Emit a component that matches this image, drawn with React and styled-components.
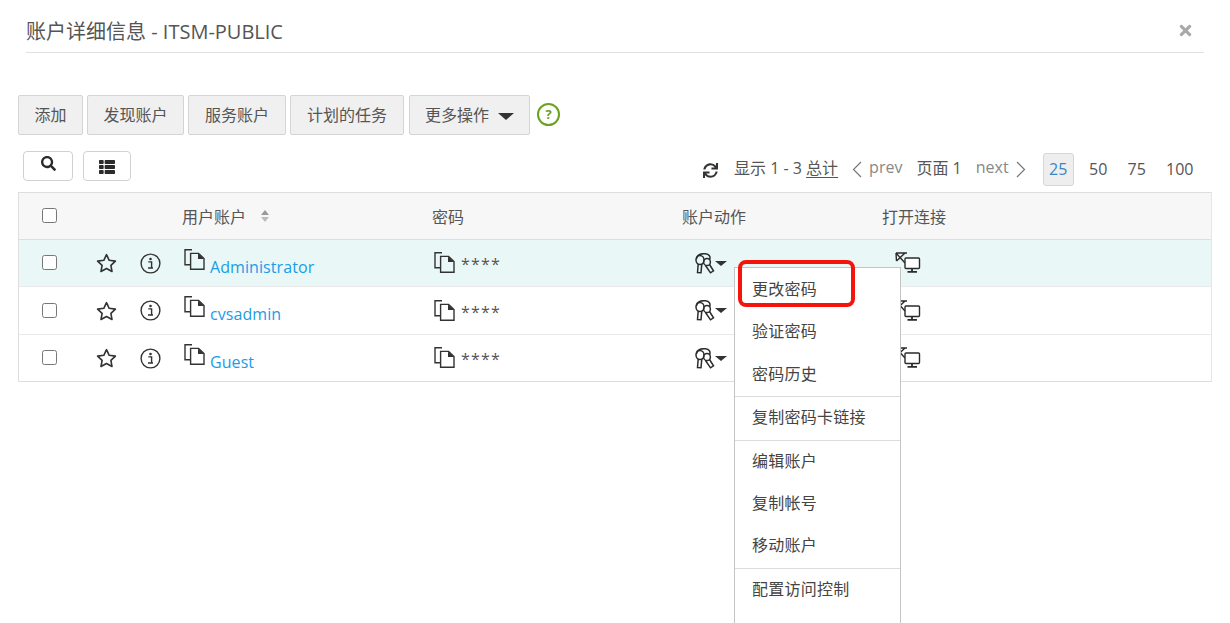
import styled, { createGlobalStyle } from "styled-components";
import { FaSearch, FaThList, FaSync, FaTimes } from "react-icons/fa";

const Global = createGlobalStyle`
  html, body { margin: 0; padding: 0; background: #fff; height: 623px; overflow: hidden; }
  body { font-family: "Open Sans", "Noto Sans CJK SC", sans-serif; color: #444; }
`;

const Page = styled.div`
  position: relative;
  width: 1230px;
  height: 623px;
  overflow: hidden;
`;
const TitleBar = styled.div`
  display: flex;
  justify-content: space-between;
  align-items: center;
  height: 52px;
  margin: 0 26px;
  padding-right: 10px;
  border-bottom: 1px solid #e0e0e0;
  box-sizing: content-box;
`;
const Title = styled.div`
  font-size: 20px;
  color: #555;
  padding-top: 9px;
`;
const Close = styled.span`
  display: flex;
  color: #a9a9a9;
  font-size: 17px;
  padding-top: 8px;
`;
const Toolbar = styled.div`
  display: flex;
  align-items: flex-start;
  margin: 42px 0 0 18px;
  gap: 4px;
`;
const ActionButton = styled.button`
  height: 40px;
  width: ${(p) => p.$w}px;
  padding: 0 0 2px;
  background: #f0f0f0;
  border: 1px solid #d4d4d4;
  border-radius: 2px;
  font: 16px "Open Sans", "Noto Sans CJK SC", sans-serif;
  color: #555;
  display: flex;
  align-items: center;
  justify-content: center;
  gap: 9px;
  margin-left: ${(p) => p.$ml || 0}px;
`;
const Caret = styled.span`
  display: inline-block;
  width: 0;
  height: 0;
  border-left: ${(p) => p.$size}px solid transparent;
  border-right: ${(p) => p.$size}px solid transparent;
  border-top: ${(p) => p.$size - 1}px solid #333;
  margin-top: ${(p) => p.$top || 0}px;
`;
const Help = styled.span`
  width: 19px;
  height: 19px;
  border: 2px solid #6aa11e;
  border-radius: 50%;
  color: #6aa11e;
  font: bold 13px/19px "Open Sans", sans-serif;
  text-align: center;
  margin: 8px 0 0 3px;
`;
const FilterRow = styled.div`
  display: flex;
  justify-content: space-between;
  align-items: flex-start;
  height: 42px;
  margin: 15px 30px 0 23px;
`;
const Tools = styled.div`
  display: flex;
  gap: 10px;
  padding-top: 1px;
`;
const IconButton = styled.button`
  width: ${(p) => p.$w}px;
  height: 30px;
  padding: ${(p) => p.$pt}px 0 ${(p) => p.$pb}px;
  background: #fff;
  border: 1px solid #d2d2d2;
  border-radius: 4px;
  color: #2b2b2b;
  font-size: ${(p) => p.$fs}px;
  display: flex;
  align-items: center;
  justify-content: center;
`;
const Pager = styled.div`
  display: flex;
  align-items: center;
  font-size: 16px;
  color: #555;
  height: 34px;
  margin-top: 2px;
`;
const Refresh = styled.span`
  display: flex;
  font-size: 15px;
  color: #333;
  margin: 3px 16px 0 0;
`;
const PagerText = styled.span`
  margin: 0 0 5px ${(p) => p.$ml || 0}px;
`;
const Total = styled.span`
  text-decoration: underline;
  text-underline-offset: 3px;
`;
const Muted = styled.span`
  color: #888;
  display: flex;
  align-items: center;
  gap: 7px;
  margin-left: 14px;
`;
const PageSize = styled.span`
  font-size: 16px;
  height: 33px;
  line-height: 31px;
  padding: 0 5.5px;
  box-sizing: border-box;
  border: 1px solid ${(p) => (p.$active ? "#d6d6d6" : "transparent")};
  border-radius: 3px;
  background: ${(p) => (p.$active ? "#eee" : "transparent")};
  color: ${(p) => (p.$active ? "#3d85c6" : "#555")};
  margin: ${(p) => (p.$active ? "0 1.5px 0 17px" : "0 0 0 7.2px")};
`;
const Table = styled.div`
  margin: 0 18px;
  border: 1px solid #dedede;
  border-right-color: #e6e6e6;
`;
const Row = styled.div`
  display: grid;
  grid-template-columns: 163px 250px 250px 200px 1fr;
  align-items: center;
  height: ${(p) => p.$h}px;
  background: ${(p) => p.$bg || "#fff"};
  border-bottom: ${(p) => (p.$last ? "none" : "1px solid #e9e9e9")};
  box-sizing: border-box;
  font-size: 16px;
`;
const Lead = styled.div`
  display: flex;
  align-items: center;
  padding-left: 23px;
`;
const Check = styled.span`
  width: 13px;
  height: 13px;
  margin-top: -1px;
  border: 1.5px solid #777;
  border-radius: 2.5px;
  background: #fff;
`;
const HeadText = styled.span`
  display: flex;
  align-items: center;
  gap: 15px;
  color: #555;
`;
const Sorter = styled.span`
  display: flex;
  flex-direction: column;
  gap: 2px;
`;
const SortTip = styled.span`
  width: 0;
  height: 0;
  border-left: 4px solid transparent;
  border-right: 4px solid transparent;
  ${(p) => (p.$up ? "border-bottom: 5px solid #999;" : "border-top: 5px solid #bbb;")}
`;
const Cell = styled.div`
  display: flex;
  align-items: flex-start;
  padding-left: ${(p) => p.$pl || 0}px;
`;
const AccountLink = styled.a`
  color: #1b9ce6;
  font-size: 16px;
  margin: 7px 0 0 5px;
  line-height: 22px;
  letter-spacing: 0.08px;
`;
const Stars = styled.span`
  color: #555;
  font-size: 16px;
  letter-spacing: 1.2px;
  margin: 3px 0 0 6px;
  line-height: 19px;
`;
const Menu = styled.div`
  position: absolute;
  left: 734px;
  top: 267px;
  width: 167px;
  height: 400px;
  background: #fff;
  border: 1px solid #c4c4c4;
  box-sizing: border-box;
  padding-top: 1px;
  z-index: 2;
`;
const MenuItem = styled.div`
  height: 42.4px;
  line-height: 41.5px;
  padding-left: 17px;
  font-size: 16px;
  letter-spacing: 0.25px;
  color: #444;
`;
const MenuLine = styled.div`
  height: 1px;
  background: #dcdcdc;
`;
const Highlight = styled.div`
  position: absolute;
  left: 738px;
  top: 260px;
  width: 117px;
  height: 47px;
  border: 4px solid #f5140c;
  border-radius: 8px;
  box-sizing: border-box;
  z-index: 3;
`;

const StarIcon = () => (
  <svg width="21" height="20" viewBox="0 0 21 20" fill="none" stroke="#333" strokeWidth="1.6" style={{ marginLeft: 39 }}>
    <path d="M10.5 1.6l2.7 5.7 6.2.8-4.5 4.3 1.1 6.1-5.5-3-5.5 3 1.1-6.1L1.6 8.1l6.2-.8z" strokeLinejoin="round" />
  </svg>
);

const InfoIcon = () => (
  <svg width="21" height="21" viewBox="0 0 21 21" fill="none" style={{ marginLeft: 23 }}>
    <circle cx="10.5" cy="10.5" r="9.4" stroke="#333" strokeWidth="1.4" />
    <circle cx="10.5" cy="6" r="1.3" fill="#333" />
    <path d="M8.3 8.9h3.3v6h1.2M8 15h5" stroke="#333" strokeWidth="1.4" />
  </svg>
);

const CopyIcon = () => (
  <svg width="21" height="21" viewBox="0 0 21 21" fill="none" stroke="#333" strokeWidth="1.4">
    <path d="M8 .8H1v15h5" />
    <path d="M6.6 4.4h8l5.4 5.2v10.7H6.6z" />
    <path d="M14 4.4l6 5.6h-6z" fill="#333" stroke="none" />
  </svg>
);

const KeysIcon = () => (
  <svg width="20" height="21" viewBox="0 0 20 21" fill="none" stroke="#2b2b2b" strokeWidth="1.5">
    <path d="M1.5 6C1.5 1.5 7 .3 10.5.8c3.5.5 5.5 2.8 4 6" />
    <ellipse cx="5" cy="7" rx="4" ry="4.5" />
    <path d="M3.2 11l-.7 8.5 3.500.3.8-8.800" />
    <ellipse cx="12" cy="9" rx="3.400" ry="3.600" />
    <path d="M10.500 12.500l5 7.300 3-2-4-6.300" />
  </svg>
);

const LinkIcon = () => (
  <svg width="26" height="22" viewBox="0 0 26 22" fill="none" stroke="#2b2b2b" strokeWidth="1.4">
    <path d="M1 1h11M1 1l9 10M1.500 9L10 1M1 1l.5 8" />
    <rect x="10" y="6" width="14.500" height="10.500" rx="1" fill="#fff" />
    <path d="M17 16.500v3M12.500 19.800h9.500" strokeWidth="1.800" />
  </svg>
);

const rows = [
  { name: "Administrator", bg: "#e9f8f6", h: 47 },
  { name: "cvsadmin", h: 48 },
  { name: "Guest", h: 46, last: true },
];

const App = () => {
  return (
    <Page>
      <Global />
      <TitleBar>
        <Title>账户详细信息 - ITSM-PUBLIC</Title>
        <Close><FaTimes /></Close>
      </TitleBar>

      <Toolbar>
        <ActionButton $w={65}>添加</ActionButton>
        <ActionButton $w={97}>发现账户</ActionButton>
        <ActionButton $w={98}>服务账户</ActionButton>
        <ActionButton $w={114}>计划的任务</ActionButton>
        <ActionButton $w={121} $ml={1}>更多操作<Caret $size={8} $top={5} /></ActionButton>
        <Help>?</Help>
      </Toolbar>

      <FilterRow>
        <Tools>
          <IconButton $w={50} $pt={0} $pb={6} $fs={15}><FaSearch /></IconButton>
          <IconButton $w={48} $pt={2} $pb={0} $fs={16}><FaThList /></IconButton>
        </Tools>
        <Pager>
          <Refresh><FaSync /></Refresh>
          <PagerText>显示 1 - 3 <Total>总计</Total></PagerText>
          <Muted>
            <svg width="10" height="17" viewBox="0 0 10 17" fill="none" stroke="#777" strokeWidth="1.2"><path d="M9 1L1.5 8.5 9 16" /></svg>
            <PagerText>prev</PagerText>
          </Muted>
          <PagerText $ml={14}>页面 1</PagerText>
          <Muted>
            <PagerText>next</PagerText>
            <svg width="10" height="17" viewBox="0 0 10 17" fill="none" stroke="#777" strokeWidth="1.2"><path d="M1 1l7.500 7.500L1 16" /></svg>
          </Muted>
          <PageSize $active>25</PageSize>
          <PageSize>50</PageSize>
          <PageSize>75</PageSize>
          <PageSize>100</PageSize>
        </Pager>
      </FilterRow>

      <Table>
        <Row $h={47} $bg="#f7f7f7" style={{ borderBottomColor: "#dedede" }}>
          <Lead><Check /></Lead>
          <HeadText>
            用户账户
            <Sorter><SortTip $up /><SortTip /></Sorter>
          </HeadText>
          <HeadText>密码</HeadText>
          <HeadText>账户动作</HeadText>
          <HeadText>打开连接</HeadText>
        </Row>
        {rows.map((r) => (
          <Row key={r.name} $h={r.h} $bg={r.bg} $last={r.last}>
            <Lead>
              <Check />
              <StarIcon />
              <InfoIcon />
            </Lead>
            <Cell $pl={2}>
              <CopyIcon />
              <AccountLink>{r.name}</AccountLink>
            </Cell>
            <Cell $pl={2}>
              <CopyIcon />
              <Stars>****</Stars>
            </Cell>
            <Cell $pl={13}>
              <KeysIcon />
              <Caret $size={6} $top={8} />
            </Cell>
            <Cell $pl={13}>
              <LinkIcon />
            </Cell>
          </Row>
        ))}
      </Table>

      <Menu>
        <MenuItem>更改密码</MenuItem>
        <MenuItem>验证密码</MenuItem>
        <MenuItem>密码历史</MenuItem>
        <MenuLine />
        <MenuItem>复制密码卡链接</MenuItem>
        <MenuLine />
        <MenuItem>编辑账户</MenuItem>
        <MenuItem>复制帐号</MenuItem>
        <MenuItem>移动账户</MenuItem>
        <MenuLine />
        <MenuItem>配置访问控制</MenuItem>
      </Menu>
      <Highlight />
    </Page>
  );
};

export default App;
